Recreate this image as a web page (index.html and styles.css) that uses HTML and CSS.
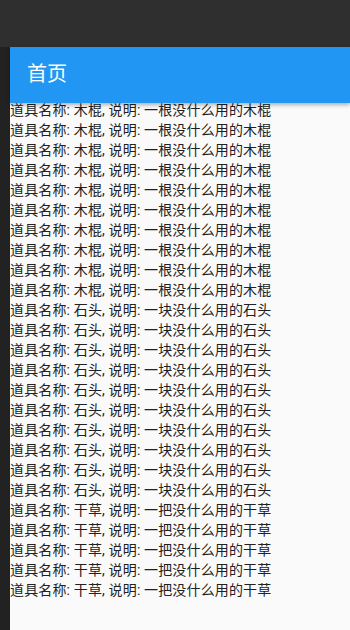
FILE: index.html
```html
<!DOCTYPE html>
<html lang="zh">

<head>
    <meta charset="UTF-8">
    <meta name="viewport" content="width=device-width, initial-scale=1.0">
    <link rel="stylesheet" href="styles.css">
    <title>首页</title>
</head>

<body>
    <div class="statusbar"></div>
    <div class="frame">
        <div class="edge"></div>
        <div class="app">
            <header class="appbar">首页</header>
            <div class="list">
                <div class="item">道具名称: 木棍, 说明: 一根没什么用的木棍</div>
                <div class="item">道具名称: 木棍, 说明: 一根没什么用的木棍</div>
                <div class="item">道具名称: 木棍, 说明: 一根没什么用的木棍</div>
                <div class="item">道具名称: 木棍, 说明: 一根没什么用的木棍</div>
                <div class="item">道具名称: 木棍, 说明: 一根没什么用的木棍</div>
                <div class="item">道具名称: 木棍, 说明: 一根没什么用的木棍</div>
                <div class="item">道具名称: 木棍, 说明: 一根没什么用的木棍</div>
                <div class="item">道具名称: 木棍, 说明: 一根没什么用的木棍</div>
                <div class="item">道具名称: 木棍, 说明: 一根没什么用的木棍</div>
                <div class="item">道具名称: 木棍, 说明: 一根没什么用的木棍</div>
                <div class="item">道具名称: 石头, 说明: 一块没什么用的石头</div>
                <div class="item">道具名称: 石头, 说明: 一块没什么用的石头</div>
                <div class="item">道具名称: 石头, 说明: 一块没什么用的石头</div>
                <div class="item">道具名称: 石头, 说明: 一块没什么用的石头</div>
                <div class="item">道具名称: 石头, 说明: 一块没什么用的石头</div>
                <div class="item">道具名称: 石头, 说明: 一块没什么用的石头</div>
                <div class="item">道具名称: 石头, 说明: 一块没什么用的石头</div>
                <div class="item">道具名称: 石头, 说明: 一块没什么用的石头</div>
                <div class="item">道具名称: 石头, 说明: 一块没什么用的石头</div>
                <div class="item">道具名称: 石头, 说明: 一块没什么用的石头</div>
                <div class="item">道具名称: 干草, 说明: 一把没什么用的干草</div>
                <div class="item">道具名称: 干草, 说明: 一把没什么用的干草</div>
                <div class="item">道具名称: 干草, 说明: 一把没什么用的干草</div>
                <div class="item">道具名称: 干草, 说明: 一把没什么用的干草</div>
                <div class="item">道具名称: 干草, 说明: 一把没什么用的干草</div>
            </div>
        </div>
    </div>
</body>

</html>
```

FILE: styles.css
```css
html,
body {
    height: 100%;
}

body {
    margin: 0;
    padding: 0;
    background-color: #2f2f2f;
    font-family: Roboto, "Noto Sans CJK SC", sans-serif;
    display: flex;
    flex-direction: column;
    overflow: hidden;
}

.statusbar {
    height: 47px;
    flex-shrink: 0;
    background-color: #2f2f2f;
}

.frame {
    flex: 1;
    display: flex;
}

.edge {
    width: 10px;
    flex-shrink: 0;
    background-color: #222222;
}

.app {
    flex: 1;
    display: flex;
    flex-direction: column;
    background-color: #fafafa;
}

.appbar {
    position: relative;
    z-index: 1;
    height: 56px;
    flex-shrink: 0;
    box-sizing: border-box;
    padding-left: 17px;
    background-color: #2196f3;
    color: white;
    font-size: 20px;
    line-height: 54px;
    box-shadow: 0 2px 4px rgba(0, 0, 0, 0.3);
}

.list {
    margin-top: -3px;
}

.item {
    height: 20px;
    line-height: 20px;
    font-size: 14px;
    letter-spacing: 0.15px;
    color: #212121;
    white-space: nowrap;
}
```
